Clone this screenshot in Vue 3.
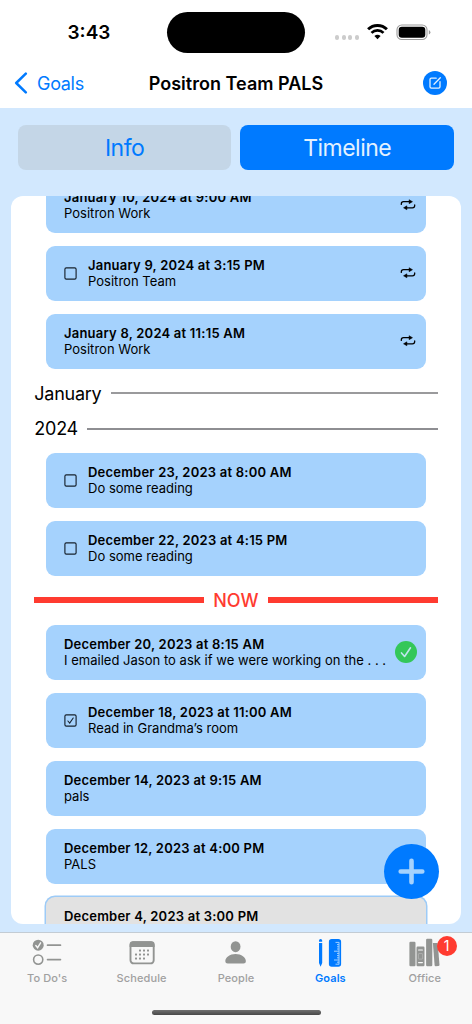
<template>
  <div class="screen">
    <!-- Status bar -->
    <div class="status">
      <span class="clock">3:43</span>
      <div class="island"></div>
      <div class="status-icons">
        <div class="dots"><i v-for="n in 4" :key="n"></i></div>
        <svg class="wifi" viewBox="0 0 21 16" width="21" height="16">
          <path d="M1.1 5.3a13.4 13.4 0 0 1 18.8 0" fill="none" stroke="#000" stroke-width="2.9" />
          <path d="M4.5 8.9a8.4 8.4 0 0 1 12 0" fill="none" stroke="#000" stroke-width="2.7" />
          <path d="M7.4 12.1a4.5 4.5 0 0 1 6.2 0L10.5 15.2z" />
        </svg>
        <svg class="battery" viewBox="0 0 36 17" width="36" height="17">
          <rect x="1" y="1" width="30" height="14.5" rx="4.8" fill="none" stroke="#9b9b9b" stroke-width="1.1" />
          <rect x="2.7" y="2.7" width="26.6" height="11.1" rx="3.2" />
          <path d="M32.8 6v4.6q1.6-.7 1.6-2.3t-1.6-2.3z" fill="#9b9b9b" />
        </svg>
      </div>
    </div>

    <!-- Navigation bar -->
    <header class="nav">
      <div class="back">
        <svg viewBox="0 0 14 22" width="14" height="22">
          <path d="M11.8 1.7 2.2 11l9.6 9.3" fill="none" stroke="#007aff" stroke-width="2.5" stroke-linecap="round" stroke-linejoin="round" />
        </svg>
        <span>Goals</span>
      </div>
      <h1>Positron Team PALS</h1>
      <div class="edit">
        <svg viewBox="0 0 24 24" width="24" height="24">
          <circle cx="12" cy="12" r="12" fill="#007aff" />
          <path d="M13.2 7.2H8.4q-1.4 0-1.4 1.4v7.2q0 1.4 1.4 1.4h7.2q1.4 0 1.4-1.4v-5.1M11 13.3l6.3-6.5" fill="none" stroke="#e4f1ff" stroke-width="1.3" stroke-linecap="round" />
        </svg>
      </div>
    </header>

    <!-- Body -->
    <main class="content">
      <div class="tabs">
        <button class="tab">Info</button>
        <button class="tab active">Timeline</button>
      </div>

      <section class="panel">
        <div class="list">
          <template v-for="(row, idx) in rows" :key="idx">
            <div v-if="row.divider" class="divider" :class="row.divider">
              <hr v-if="row.divider === 'now'" />
              <span>{{ row.label }}</span>
              <hr />
            </div>
            <article v-else class="card" :class="{ muted: row.muted }">
              <svg v-if="row.check" class="check" viewBox="0 0 13 13" width="13" height="13">
                <rect x=".9" y=".9" width="11.2" height="11.2" rx="1.4" fill="none" stroke="#17222d" stroke-width="1.15" />
                <path v-if="row.check === 'done'" d="m3.9 7 1.8 2 3.5-5" fill="none" stroke="#17222d" stroke-width="1.1" stroke-linecap="round" />
              </svg>
              <div class="text">
                <p class="date">{{ row.date }}</p>
                <p class="note">{{ row.note }}</p>
              </div>
              <svg v-if="row.repeat" class="repeat" viewBox="0 0 16 14" width="16" height="14">
                <path d="M1.3 6.4V5.9Q1.3 3.7 3.5 3.7H10.5M14.7 6.9v.5q0 2.4-2.3 2.4H5.5" fill="none" stroke="#000" stroke-width="1.25" stroke-linecap="round" />
                <path d="M9.1 1.7v4l3.4-2zM6.9 7.8v4L3.5 9.8z" stroke="#000" stroke-width=".5" stroke-linejoin="round" />
              </svg>
              <svg v-if="row.approved" class="approved" viewBox="0 0 22 22" width="22" height="22">
                <circle cx="11" cy="11" r="11" fill="#34c759" />
                <path d="m6.5 11.9 3.1 3.6 5.9-8.7" fill="none" stroke="#bfe6ec" stroke-width="1.6" stroke-linecap="round" stroke-linejoin="round" />
              </svg>
            </article>
          </template>
        </div>
      </section>

      <div class="add">
        <svg viewBox="0 0 55 55" width="55" height="55">
          <path d="M27.5 16.7v21.6M16.7 27.5h21.6" stroke="#a5d2fd" stroke-width="4.6" stroke-linecap="round" />
        </svg>
      </div>
    </main>

    <!-- Tab bar -->
    <footer class="tabbar">
      <div v-for="item in items" :key="item.name" class="item" :class="{ current: item.current }">
        <svg v-if="item.name === 'To Do\'s'" viewBox="0 0 30 30" width="30" height="30">
          <circle cx="6.2" cy="7.2" r="5.5" fill="currentColor" />
          <path d="m3.8 7.5 1.8 2.2 3-4.9" fill="none" stroke="#f7f7f7" stroke-width="1.4" stroke-linecap="round" />
          <circle cx="6.2" cy="21.6" r="4.6" fill="none" stroke="currentColor" stroke-width="1.6" />
          <path d="M15.6 7.2h12.8M15.6 21.6h12.8" stroke="currentColor" stroke-width="1.8" stroke-linecap="round" />
        </svg>
        <svg v-else-if="item.name === 'Schedule'" viewBox="0 0 30 30" width="30" height="30">
          <rect x="3.5" y="4.2" width="23.2" height="21.2" rx="3.2" fill="none" stroke="currentColor" stroke-width="1.9" />
          <path d="M2.6 9V6.4Q2.6 3.2 6 3.2h18.2q3.4 0 3.4 3.2V9z" fill="currentColor" />
          <rect v-for="(d, i) in calendarDots" :key="i" :x="d[0]" :y="d[1]" width="2" height="2" rx=".5" fill="currentColor" />
        </svg>
        <svg v-else-if="item.name === 'People'" viewBox="0 0 30 30" width="30" height="30">
          <ellipse cx="14.6" cy="8.7" rx="4.9" ry="5.5" fill="currentColor" />
          <path d="M4.3 23.2c0-3.9 4.5-7.3 10.3-7.3s10.3 3.4 10.3 7.3q0 2.3-2.4 2.3H6.7q-2.4 0-2.4-2.3z" fill="currentColor" />
        </svg>
        <svg v-else-if="item.name === 'Goals'" viewBox="0 0 30 30" width="30" height="30">
          <path d="M4 2.4q0-1.5 1.6-1.5t1.6 1.5v1.4H4zM4 5h3.2v20L5.6 28.8 4 25z" fill="currentColor" />
          <rect x="13.9" y=".9" width="12.2" height="27.9" rx="2.8" fill="currentColor" />
          <path d="M20.5 4.4H24M22 6.6h2M22 8.8h2M22 11h2M19 13.2h5M22 15.4h2M22 17.6h2M22 19.8h2M19 22h5M22 24.2h2M20.5 26.2H24M24 4.2v22.2" stroke="#9fcfff" stroke-width="1" />
        </svg>
        <svg v-else viewBox="0 0 32 30" width="32" height="30">
          <rect x=".4" y="3.8" width="6.1" height="24.4" rx="1.2" fill="currentColor" />
          <rect x="7.5" y="8.6" width="8" height="19.6" rx="1.2" fill="currentColor" />
          <path d="M9.6 12h3.8M9.6 24.6h3.8" stroke="#f7f7f7" stroke-width="1.2" stroke-linecap="round" />
          <rect x="9.4" y="15.6" width="4.2" height="5.5" rx=".6" fill="none" stroke="#c9c9c9" stroke-width=".5" />
          <rect x="17.1" y=".8" width="6.2" height="27.4" rx="1.2" fill="currentColor" />
          <path d="M23.9 5h4.8l1.8 22q0 1-1.2 1.1l-2.6.2q-1 0-1.1-1z" fill="currentColor" />
        </svg>
        <b v-if="item.badge" class="badge">{{ item.badge }}</b>
        <span>{{ item.name }}</span>
      </div>
      <div class="home"></div>
    </footer>
  </div>
</template>

<script setup>
const rows = [
  { date: 'January 10, 2024 at 9:00 AM', note: 'Positron Work', repeat: true },
  { date: 'January 9, 2024 at 3:15 PM', note: 'Positron Team', check: 'open', repeat: true },
  { date: 'January 8, 2024 at 11:15 AM', note: 'Positron Work', repeat: true },
  { divider: 'month', label: 'January' },
  { divider: 'year', label: '2024' },
  { date: 'December 23, 2023 at 8:00 AM', note: 'Do some reading', check: 'open' },
  { date: 'December 22, 2023 at 4:15 PM', note: 'Do some reading', check: 'open' },
  { divider: 'now', label: 'NOW' },
  { date: 'December 20, 2023 at 8:15 AM', note: 'I emailed Jason to ask if we were working on the . . .', approved: true },
  { date: 'December 18, 2023 at 11:00 AM', note: 'Read in Grandma’s room', check: 'done' },
  { date: 'December 14, 2023 at 9:15 AM', note: 'pals' },
  { date: 'December 12, 2023 at 4:00 PM', note: 'PALS' },
  { date: 'December 4, 2023 at 3:00 PM', note: '', muted: true },
]

const items = [
  { name: "To Do's" },
  { name: 'Schedule' },
  { name: 'People' },
  { name: 'Goals', current: true },
  { name: 'Office', badge: 1 },
]

// the month starts on the second column and ends one short
const calendarDots = []
for (let r = 0; r < 3; r++) {
  for (let c = 0; c < 4; c++) {
    if (r === 0 && c === 0) continue
    if (r === 2 && c === 3) continue
    calendarDots.push([8 + c * 4, 11.5 + r * 4])
  }
}
</script>

<style>
body {
  margin: 0;
  background: #fff;
}
</style>

<style scoped>
.screen {
  width: 472px;
  height: 1024px;
  display: flex;
  flex-direction: column;
  overflow: hidden;
  background: #fff;
  color: #000;
  font-family: Inter, "Liberation Sans", sans-serif;
}

svg {
  display: block;
  flex: none;
}

/* Status bar */
.status {
  display: grid;
  grid-template-columns: 167px 138px 1fr;
  height: 60px;
  padding-top: 5px;
  box-sizing: border-box;
  align-items: center;
}

.clock {
  padding-left: 67.5px;
  font-size: 19px;
  font-weight: 600;
}

.island {
  height: 41px;
  border-radius: 21px;
  background: #000;
}

.status-icons {
  display: flex;
  align-items: center;
  padding-left: 30px;
}

.dots {
  display: flex;
  gap: 2.4px;
  margin: 10px 8px 0 0;
}

.dots i {
  width: 4.2px;
  height: 4.2px;
  border-radius: 50%;
  background: #ccc;
}

.wifi {
  margin-top: -1px;
}

.battery {
  margin: -1px 0 0 8px;
}

/* Navigation bar */
.nav {
  display: grid;
  grid-template-columns: 1fr auto 1fr;
  align-items: center;
  height: 48px;
  padding: 0 25px 2px 14px;
  box-sizing: border-box;
}

.back {
  display: flex;
  align-items: center;
  gap: 9px;
  color: #007aff;
  font-size: 18px;
  letter-spacing: -0.3px;
}

.nav h1 {
  margin: 0;
  padding-left: 11px;
  font-size: 18px;
  font-weight: 600;
  letter-spacing: 0.02px;
}

.edit {
  justify-self: end;
}

/* Body */
.content {
  position: relative;
  flex: 1;
  min-height: 0;
  display: flex;
  flex-direction: column;
  padding: 17px 11px 8px;
  box-sizing: border-box;
  background: #d2e8fe;
}

.tabs {
  display: flex;
  gap: 9px;
  padding: 0 7px 0 6.8px;
  margin-bottom: 26.5px;
}

.tab {
  flex: 1;
  height: 44.5px;
  padding: 1px 0 0;
  border: 0;
  border-radius: 8px;
  background: #c4d6e7;
  color: #007aff;
  font-family: inherit;
  font-size: 23px;
  letter-spacing: -0.5px;
}

.tab.active {
  background: #007aff;
  color: #e3f1ff;
}

.panel {
  flex: 1;
  min-height: 0;
  overflow: hidden;
  border-radius: 12px;
  background: #fff;
}

.list {
  margin-top: -18.5px;
  padding: 0 23.5px 0 23.3px;
}

.card {
  display: flex;
  align-items: center;
  height: 55px;
  margin: 0 12px 13px 11.7px;
  padding: 0 9.5px 0 18px;
  box-sizing: border-box;
  border-radius: 9px;
  background: #a5d2fd;
}

.card.muted {
  background: #e2e2e2;
  box-shadow: 0 0 0 1.5px #9dcbf7;
}

.check {
  margin: 0 10.5px 0 0.5px;
}

.text {
  flex: 1;
  min-width: 0;
  white-space: nowrap;
}

.text p {
  margin: 0;
  height: 16px;
  font-size: 13px;
  line-height: 16px;
}

.text .date {
  font-weight: 600;
  letter-spacing: 0.22px;
}

.text .note {
  letter-spacing: 0.02px;
}

.approved {
  margin-right: -1px;
}

.divider {
  display: flex;
  align-items: center;
  gap: 9px;
  height: 23px;
  margin-bottom: 12.5px;
  font-size: 18px;
  letter-spacing: -0.25px;
}

.divider hr {
  flex: 1;
  height: 1.5px;
  margin: 0;
  border: 0;
  background: #9a9a9c;
}

.divider.year hr {
  height: 2px;
  background: #8e8e92;
}

.divider.now {
  margin-bottom: 13px;
  color: #ff3b30;
  font-weight: 500;
  letter-spacing: 0;
}

.divider.now hr {
  height: 5.5px;
  background: #ff3b30;
}

.add {
  position: absolute;
  right: 33px;
  bottom: 33px;
  width: 55px;
  height: 55px;
  border-radius: 50%;
  background: #007aff;
}

/* Tab bar */
.tabbar {
  position: relative;
  display: grid;
  grid-template-columns: repeat(5, 1fr);
  height: 92px;
  padding-top: 5px;
  box-sizing: border-box;
  border-top: 1px solid #c3ccd4;
  background: #f8f8f8;
}

.item {
  position: relative;
  display: flex;
  flex-direction: column;
  align-items: center;
  color: #929492;
  font-size: 11px;
  font-weight: 500;
  letter-spacing: 0.1px;
}

.item span {
  margin-top: 3px;
  line-height: 14px;
  color: #a0a0a0;
}

.item.current,
.item.current span {
  color: #007aff;
}

.item.current span {
  font-weight: 600;
}

.badge {
  position: absolute;
  top: -2px;
  left: 59px;
  width: 20px;
  height: 20px;
  border-radius: 50%;
  background: #ff3b30;
  color: #fff;
  font-size: 14px;
  font-weight: 400;
  line-height: 20px;
  text-align: center;
}

.home {
  position: absolute;
  left: 151.5px;
  bottom: 9px;
  width: 169px;
  height: 5.5px;
  border-radius: 3px;
  background: linear-gradient(#707070, #484848);
}
</style>
